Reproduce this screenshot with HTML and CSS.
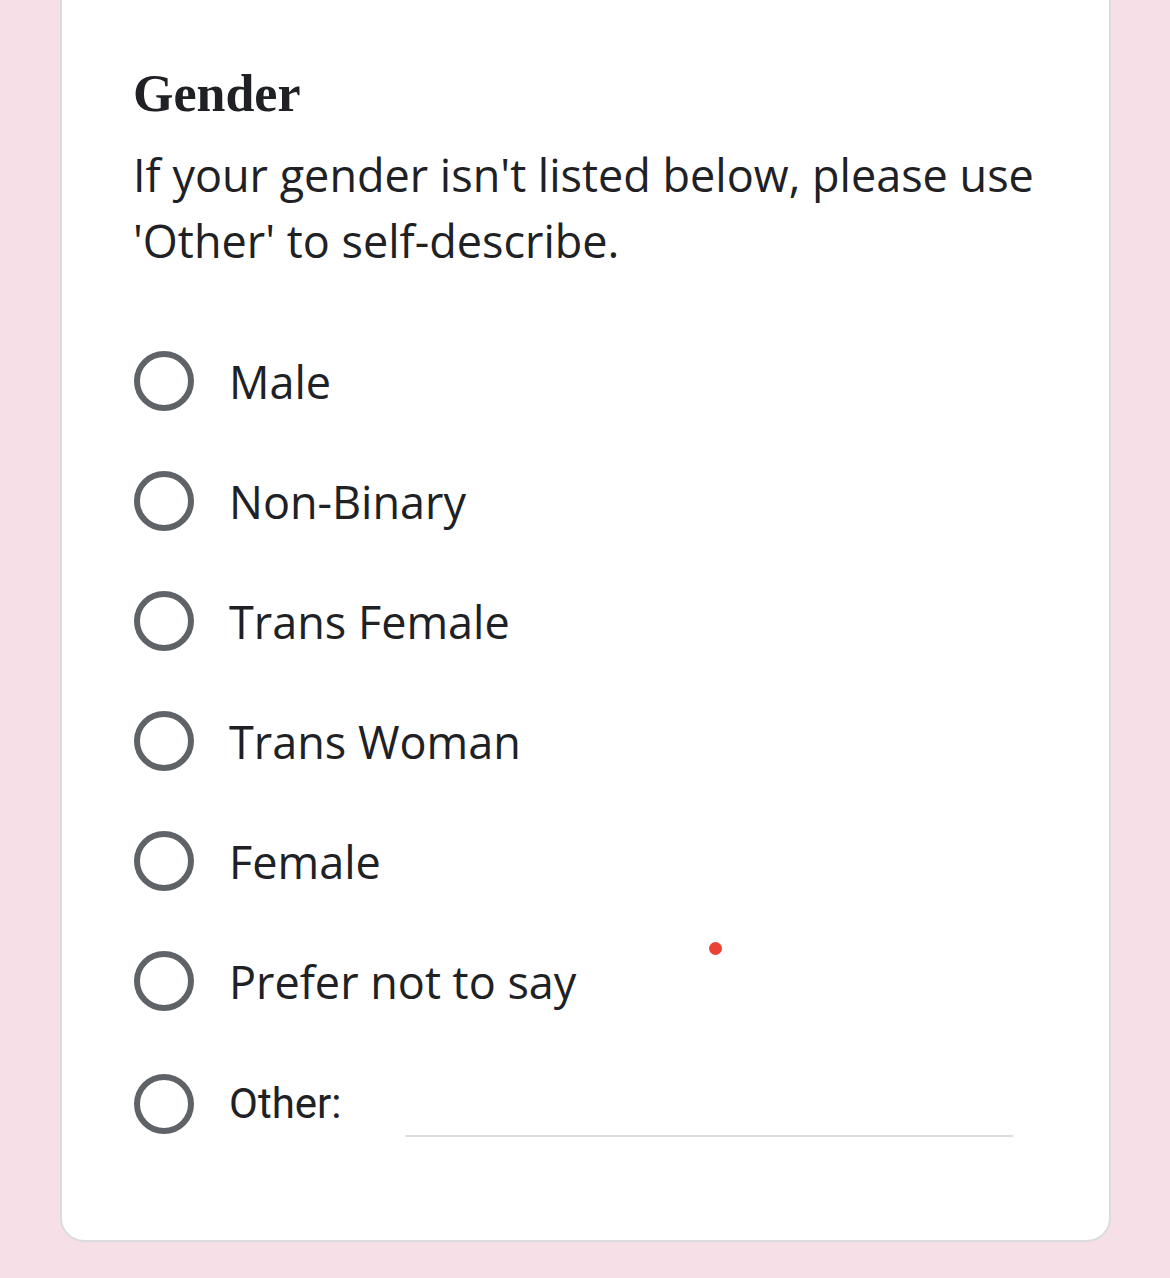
FILE: index.html
```html
<!DOCTYPE html>
<html>
<head>
<meta charset="utf-8">
<link rel="stylesheet" href="styles.css">
</head>
<body>
<div class="card">
  <h2 class="title">Gender</h2>
  <p class="desc">If your gender isn't listed below, please use 'Other' to self-describe.</p>
  <div class="options">
    <div class="opt"><span class="radio"></span><span class="label">Male</span></div>
    <div class="opt"><span class="radio"></span><span class="label">Non-Binary</span></div>
    <div class="opt"><span class="radio"></span><span class="label">Trans Female</span></div>
    <div class="opt"><span class="radio"></span><span class="label">Trans Woman</span></div>
    <div class="opt"><span class="radio"></span><span class="label">Female</span></div>
    <div class="opt"><span class="radio"></span><span class="label">Prefer not to say</span><span class="dot"></span></div>
    <div class="opt other"><span class="radio"></span><span class="label-other">Other:</span><span class="line"></span></div>
  </div>
</div>
</body>
</html>
```
FILE: styles.css
```css
html, body {
  margin: 0;
  padding: 0;
  background: #f7dfe7;
  height: 1278px;
  overflow: hidden;
}
.card {
  box-sizing: border-box;
  margin: -40px 0 0 60px;
  width: 1051px;
  background: #fff;
  border: 2px solid #dadce0;
  border-radius: 24px;
  padding: 102px 72px 73px 71px;
  position: relative;
}
.title {
  margin: 0;
  font-family: "Liberation Serif", serif;
  font-weight: bold;
  font-size: 52px;
  line-height: 60px;
  color: #202124;
}
.desc {
  margin: 18px 0 0 0;
  font-family: "Open Sans", sans-serif;
  font-size: 45px;
  line-height: 66px;
  color: #202124;
}
.options {
  margin-top: 47px;
  margin-left: 1px;
}
.opt {
  display: flex;
  align-items: center;
  height: 120px;
  position: relative;
}
.radio {
  box-sizing: border-box;
  width: 60px;
  height: 60px;
  border: 6px solid #5f6368;
  border-radius: 50%;
  flex: none;
}
.label {
  margin-left: 35px;
  font-family: "Open Sans", sans-serif;
  font-size: 45px;
  color: #202124;
}
.opt.other {
  height: 126px;
}
.label-other {
  margin-left: 35px;
  font-family: Roboto, sans-serif;
  font-size: 42px;
  color: #202124;
  margin-top: -2px;
}
.line {
  margin-left: 64px;
  width: 608px;
  height: 2px;
  background: #dadce0;
  align-self: flex-end;
  margin-bottom: 30px;
}
.dot {
  position: absolute;
  left: 575px;
  top: 21px;
  width: 13px;
  height: 13px;
  border-radius: 50%;
  background: #ea4335;
}
```
